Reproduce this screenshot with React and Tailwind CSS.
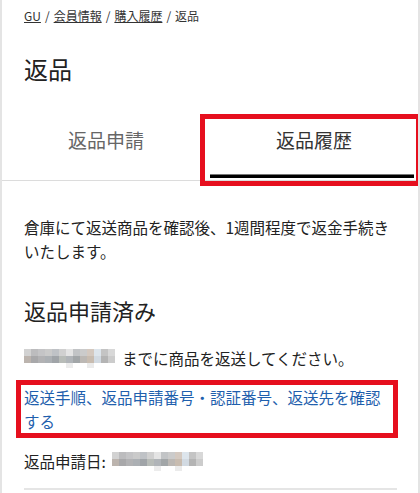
import React from 'react';

const FONT = { fontFamily: '"Noto Sans CJK JP", "Noto Sans", sans-serif' };

const row1 = ['#d2d2d2', '#bcbcbe', '#c4c4c6', '#cacaca', '#bfc2c6', '#d0d0d0', '#e4e4e4', '#c2c4c6', '#cbcbcb', '#d4c9c0', '#dde5ec', '#c4c4c4', '#d8d8d8'];
const row2 = ['#bcb4ae', '#a8a8aa', '#b2b2b4', '#acb0b4', '#a0a4a8', '#b8bcb8', '#b0b4b8', '#a2a6a8', '#bcb8b4', '#c8bcb0', '#d2dae2', '#b4b4b4', '#cccccc'];
const row3 = ['#fff', '#fff', '#fff', '#fff', '#fff', '#fff', '#ececec', '#fff', '#fff', '#ebebeb', '#fff', '#fff', '#fff'];

// blurred date (mosaic)
const Mosaic = () => (
  <span className="inline-grid grid-cols-[repeat(13,7px)] grid-rows-[7px_7px_5px] align-middle">
    {row1.map((c, i) => (
      <span key={'a' + i} style={{ backgroundColor: c }} />
    ))}
    {row2.map((c, i) => (
      <span key={'b' + i} style={{ backgroundColor: c }} />
    ))}
    {row3.map((c, i) => (
      <span key={'c' + i} style={{ backgroundColor: c }} />
    ))}
  </span>
);

const Sep = () => <span className="mx-[4px]">/</span>;

export default function App() {
  return (
    <div
      className="relative w-[420px] h-[493px] overflow-hidden bg-white border-x-2 border-[#e4e4e4] text-[#222]"
      style={FONT}
    >
      {/* Breadcrumb */}
      <div className="pt-[9px] px-[22px] text-[12px] leading-[14px] text-[#333]">
        <span className="underline">GU</span>
        <Sep />
        <span className="underline">会員情報</span>
        <Sep />
        <span className="underline">購入履歴</span>
        <Sep />
        <span>返品</span>
      </div>

      {/* Title */}
      <h1 className="mt-[30px] px-[22px] text-[24px] leading-[32px] font-normal">返品</h1>

      {/* Tabs */}
      <div className="mt-[15px] grid grid-cols-2 border-b border-[#dcdcdc]">
        <div className="h-[80px] flex flex-col items-center pt-[26px]">
          <span className="text-[19px] leading-[28px] text-[#666]">返品申請</span>
        </div>
        <div className="h-[80px] flex flex-col items-center pt-[26px]">
          <span className="text-[19px] leading-[28px] text-[#333]">返品履歴</span>
          <div className="mt-auto mb-[2px] self-stretch mr-[4px] h-[4px] bg-black border-t border-[#777]" />
        </div>
      </div>

      {/* annotation box over active tab */}
      <div className="absolute left-[198px] top-[114px] w-[221px] h-[72px] border-[5px] border-[#e60f1e]" />

      <div className="px-[22px]">
        <p className="mt-[34px] text-[15.5px] leading-[24px]">
          倉庫にて返送商品を確認後、1週間程度で返金手続きいたします。
        </p>

        <h2 className="mt-[31px] text-[22px] leading-[32px] font-normal">返品申請済み</h2>

        <div className="mt-[20px] text-[15.5px] leading-[24px] flex items-center">
          <Mosaic />
          <span className="ml-[7px]">までに商品を返送してください。</span>
        </div>

        <div className="mt-[10px] -ml-[8px] w-[382px] border-[5px] border-[#e60f1e] pl-[3px] pr-[1px]">
          <a className="text-[15.5px] leading-[24px] text-[#1f5fad]">
            返送手順、返品申請番号・認証番号、返送先を確認する
          </a>
        </div>

        <div className="mt-[11px] text-[15.5px] leading-[24px] flex items-center">
          <span>返品申請日:</span>
          <span className="ml-[6px] flex">
            <Mosaic />
          </span>
        </div>

        <div className="mt-[15px] w-[373px] border-t-2 border-[#e5e5e5]" />
      </div>
    </div>
  );
}
